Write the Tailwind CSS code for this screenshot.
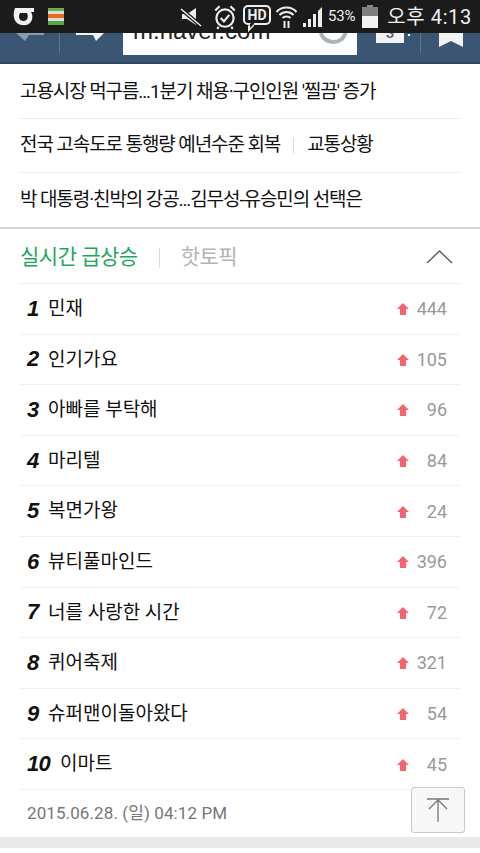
<!DOCTYPE html>
<html>
<head>
<meta charset="utf-8">
<title>m.naver.com</title>
<script src="https://cdn.jsdelivr.net/npm/@tailwindcss/browser@4"></script>
</head>
<body class="bg-white w-[480px] h-[853px] overflow-hidden font-['Roboto','Noto_Sans_CJK_KR',sans-serif]">

<!-- status bar -->
<div class="relative z-10 h-[33px] bg-[#1b1b1b] flex items-center text-[#f0f0f0]">
  <svg class="ml-[13px] w-[22px] h-[20px]" viewBox="0 0 22 20"><path d="M2 1H21V5H18C20 8 20 13 17 16C14 19 8 19 4 16C0 12 0 6 2 1ZM7 6C5 9 6 14 10.500 14C15 14 15.500 9 14 6Z" fill="#f2f2f2"/></svg>
  <div class="ml-[13px] w-[16px] h-[17px] flex flex-col">
    <div class="h-[3px] bg-[#6cae4a]"></div><div class="h-[3px] bg-[#ddd]"></div><div class="h-[4px] bg-[#e2701f]"></div><div class="h-[3px] bg-[#ddd]"></div><div class="h-[4px] bg-[#5aa844]"></div>
  </div>
  <svg class="ml-[116px] w-[22px] h-[22px]" viewBox="0 0 22 22"><path d="M2 8H7L16 2V19L7 13H2Z" fill="#eee"/><path d="M1 3L21 20" stroke="#1b1b1b" stroke-width="4"/><path d="M1 3L21 20" stroke="#eee" stroke-width="1.500"/></svg>
  <svg class="ml-[11px] w-[24px] h-[26px]" viewBox="0 0 22 24" fill="none" stroke="#eee"><circle cx="11" cy="13" r="8" stroke-width="2"/><path d="M7 13L10 16L15 10" stroke-width="2"/><path d="M2 6L6 2M20 6L16 2M5 21L4 23M17 21L18 23" stroke-width="2"/></svg>
  <div class="relative ml-[6px] mb-[3px] w-[28px] h-[20px] border-2 border-[#eee] rounded-[5px] text-[14px] leading-[16px] font-bold text-center">HD
    <div class="absolute left-[3px] top-[16px] w-[6px] h-[6px] bg-[#1b1b1b] border-l-2 border-b-2 border-[#eee] -skew-y-45"></div>
  </div>
  <svg class="ml-[4px] w-[23px] h-[26px]" viewBox="0 0 22 26" fill="none" stroke="#eee" stroke-width="2"><path d="M1 8C6 2 16 2 21 8M4 11C8 7 14 7 18 11M7 14C9 12 13 12 15 14"/><path d="M9 17V24M13 24V17" stroke-width="2"/></svg>
  <svg class="ml-[4px] w-[22px] h-[22px]" viewBox="0 0 22 22"><path d="M1 21H4V17H1ZM6 21H9V13H6ZM11 21H14V8H11ZM16 21H20V1L16 5Z" fill="#eee"/></svg>
  <span class="ml-[4px] text-[15px] tracking-[-0.2px]">53%</span>
  <div class="ml-[7px] w-[16px] h-[23px] flex flex-col items-center">
    <div class="w-[6px] h-[2px] bg-[#8a8a8a]"></div>
    <div class="w-[16px] h-[9px] bg-[#7f7f7f]"></div>
    <div class="w-[16px] h-[12px] bg-[#f4f4f4]"></div>
  </div>
  <span class="ml-[9px] text-[20px] whitespace-nowrap tracking-[0.6px]">오후 4:13</span>
</div>

<!-- browser toolbar, scrolled under the status bar -->
<div class="relative h-[31px] bg-[#3b5672] border-b-2 border-[#2f4961] overflow-hidden">
  <svg class="absolute left-[15px] top-0 w-[30px] h-[10px]" viewBox="0 0 30 10"><path d="M1 0H29V2H14L10 8Z" fill="#8a9cb0"/></svg>
  <div class="absolute left-[59px] top-0 w-px h-[20px] bg-[#5c7690]"></div>
  <svg class="absolute left-[75px] top-0 w-[30px] h-[10px]" viewBox="0 0 30 10"><path d="M1 0H29L21 8L18 2H1Z" fill="#f2f2f2"/></svg>
  <div class="absolute left-[123px] top-[-20px] w-[234px] h-[42px] bg-white pl-[10px] text-[24px] leading-[36px] text-[#222] font-['Liberation_Sans',sans-serif]">m.naver.com</div>
  <svg class="absolute left-[318px] top-0 w-[36px] h-[12px]" viewBox="0 0 36 12" fill="none"><path d="M3 0C5 8 16 12 24 6L28 0" stroke="#aab2ba" stroke-width="4"/></svg>
  <div class="absolute left-[376px] top-0 w-[28px] h-[10px] bg-[#f2f2f2] text-[#5d6f82] text-[15px] leading-[0px] font-bold text-center">3</div>
  <div class="absolute left-[408px] top-[1px] w-[2px] h-[2px] bg-white"></div>
  <div class="absolute left-[420px] top-0 w-px h-[20px] bg-[#5c7690]"></div>
  <svg class="absolute left-[439px] top-0 w-[24px] h-[14px]" viewBox="0 0 24 14"><path d="M0 0H24V14L12 8L0 14Z" fill="#f2f2f2"/></svg>
</div>

<!-- news -->
<div class="px-[20px] text-[19px] tracking-[-1.1px] text-[#111]">
  <div class="h-[55px] pt-[2px] flex items-center border-b border-[#eeeeee]">고용시장 먹구름...1분기 채용·구인인원 '찔끔' 증가</div>
  <div class="h-[54px] flex items-center border-b border-[#eeeeee]">전국 고속도로 통행량 예년수준 회복<span class="w-px h-[16px] bg-[#ddd] mx-[13px]"></span>교통상황</div>
  <div class="h-[54px] flex items-center">박 대통령·친박의 강공...김무성-유승민의 선택은</div>
</div>
<div class="h-[2px] bg-[#d4d4d4]"></div>

<!-- realtime tabs -->
<div class="h-[55px] pt-[3px] mx-[20px] flex items-center border-b border-[#eeeeee] text-[21px] tracking-[-0.5px]">
  <span class="text-[#1fa760]">실시간 급상승</span>
  <span class="w-px h-[20px] bg-[#dddddd] mx-[21px]"></span>
  <span class="text-[#b4b4b4]">핫토픽</span>
  <svg class="ml-auto mr-[7px] mb-[3px] w-[27px] h-[15px]" viewBox="0 0 27 15" fill="none"><path d="M1 14L13.500 2L26 14" stroke="#555" stroke-width="1.300"/></svg>
</div>

<!-- ranking -->
<ol class="mx-[20px] text-[#111]">
  <li class="h-[50.6px] pt-[1px] flex items-center border-b border-[#f0f0f0]"><b class="w-[28px] pl-[7px] mb-[2px] text-[22px] italic font-black font-['Liberation_Sans',sans-serif]">1</b><span class="text-[19px]">민재</span><svg class="ml-auto w-[12px] h-[12px]" viewBox="0 0 12 12"><path d="M6 0L12 6H9V12H3V6H0Z" fill="#f2646f"/></svg><span class="w-[51px] mb-[1px] text-right pr-[13px] text-[18px] text-[#999]">444</span></li>
  <li class="h-[50.6px] pt-[1px] flex items-center border-b border-[#f0f0f0]"><b class="w-[28px] pl-[7px] mb-[2px] text-[22px] italic font-black font-['Liberation_Sans',sans-serif]">2</b><span class="text-[19px]">인기가요</span><svg class="ml-auto w-[12px] h-[12px]" viewBox="0 0 12 12"><path d="M6 0L12 6H9V12H3V6H0Z" fill="#f2646f"/></svg><span class="w-[51px] mb-[1px] text-right pr-[13px] text-[18px] text-[#999]">105</span></li>
  <li class="h-[50.6px] pt-[1px] flex items-center border-b border-[#f0f0f0]"><b class="w-[28px] pl-[7px] mb-[2px] text-[22px] italic font-black font-['Liberation_Sans',sans-serif]">3</b><span class="text-[19px]">아빠를 부탁해</span><svg class="ml-auto w-[12px] h-[12px]" viewBox="0 0 12 12"><path d="M6 0L12 6H9V12H3V6H0Z" fill="#f2646f"/></svg><span class="w-[51px] mb-[1px] text-right pr-[13px] text-[18px] text-[#999]">96</span></li>
  <li class="h-[50.6px] pt-[1px] flex items-center border-b border-[#f0f0f0]"><b class="w-[28px] pl-[7px] mb-[2px] text-[22px] italic font-black font-['Liberation_Sans',sans-serif]">4</b><span class="text-[19px]">마리텔</span><svg class="ml-auto w-[12px] h-[12px]" viewBox="0 0 12 12"><path d="M6 0L12 6H9V12H3V6H0Z" fill="#f2646f"/></svg><span class="w-[51px] mb-[1px] text-right pr-[13px] text-[18px] text-[#999]">84</span></li>
  <li class="h-[50.6px] pt-[1px] flex items-center border-b border-[#f0f0f0]"><b class="w-[28px] pl-[7px] mb-[2px] text-[22px] italic font-black font-['Liberation_Sans',sans-serif]">5</b><span class="text-[19px]">복면가왕</span><svg class="ml-auto w-[12px] h-[12px]" viewBox="0 0 12 12"><path d="M6 0L12 6H9V12H3V6H0Z" fill="#f2646f"/></svg><span class="w-[51px] mb-[1px] text-right pr-[13px] text-[18px] text-[#999]">24</span></li>
  <li class="h-[50.6px] pt-[1px] flex items-center border-b border-[#f0f0f0]"><b class="w-[28px] pl-[7px] mb-[2px] text-[22px] italic font-black font-['Liberation_Sans',sans-serif]">6</b><span class="text-[19px]">뷰티풀마인드</span><svg class="ml-auto w-[12px] h-[12px]" viewBox="0 0 12 12"><path d="M6 0L12 6H9V12H3V6H0Z" fill="#f2646f"/></svg><span class="w-[51px] mb-[1px] text-right pr-[13px] text-[18px] text-[#999]">396</span></li>
  <li class="h-[50.6px] pt-[1px] flex items-center border-b border-[#f0f0f0]"><b class="w-[28px] pl-[7px] mb-[2px] text-[22px] italic font-black font-['Liberation_Sans',sans-serif]">7</b><span class="text-[19px]">너를 사랑한 시간</span><svg class="ml-auto w-[12px] h-[12px]" viewBox="0 0 12 12"><path d="M6 0L12 6H9V12H3V6H0Z" fill="#f2646f"/></svg><span class="w-[51px] mb-[1px] text-right pr-[13px] text-[18px] text-[#999]">72</span></li>
  <li class="h-[50.6px] pt-[1px] flex items-center border-b border-[#f0f0f0]"><b class="w-[28px] pl-[7px] mb-[2px] text-[22px] italic font-black font-['Liberation_Sans',sans-serif]">8</b><span class="text-[19px]">퀴어축제</span><svg class="ml-auto w-[12px] h-[12px]" viewBox="0 0 12 12"><path d="M6 0L12 6H9V12H3V6H0Z" fill="#f2646f"/></svg><span class="w-[51px] mb-[1px] text-right pr-[13px] text-[18px] text-[#999]">321</span></li>
  <li class="h-[50.6px] pt-[1px] flex items-center border-b border-[#f0f0f0]"><b class="w-[28px] pl-[7px] mb-[2px] text-[22px] italic font-black font-['Liberation_Sans',sans-serif]">9</b><span class="text-[19px]">슈퍼맨이돌아왔다</span><svg class="ml-auto w-[12px] h-[12px]" viewBox="0 0 12 12"><path d="M6 0L12 6H9V12H3V6H0Z" fill="#f2646f"/></svg><span class="w-[51px] mb-[1px] text-right pr-[13px] text-[18px] text-[#999]">54</span></li>
  <li class="h-[50.6px] pt-[1px] flex items-center border-b border-[#f0f0f0]"><b class="w-[40px] pl-[7px] mb-[2px] text-[22px] italic font-black font-['Liberation_Sans',sans-serif] tracking-[-0.8px] whitespace-nowrap">10</b><span class="text-[19px]">이마트</span><svg class="ml-auto w-[12px] h-[12px]" viewBox="0 0 12 12"><path d="M6 0L12 6H9V12H3V6H0Z" fill="#f2646f"/></svg><span class="w-[51px] mb-[1px] text-right pr-[13px] text-[18px] text-[#999]">45</span></li>
</ol>

<!-- timestamp -->
<div class="h-[47px] pl-[27px] flex items-center text-[17px] tracking-[0.1px] text-[#777]">2015.06.28. (일) 04:12 PM</div>
<div class="h-[11px] bg-[#e9e9e9]"></div>

<button class="absolute left-[411px] top-[787px] w-[54px] h-[46px] bg-[#f6f7f6] border border-[#c9c9c9] rounded-[3px] flex items-center justify-center">
  <svg class="w-[24px] h-[26px]" viewBox="0 0 24 26" fill="none" stroke="#777" stroke-width="1.300"><path d="M1 2H23M12 2V25M3 12L12 3L21 12"/></svg>
</button>
</body>
</html>
